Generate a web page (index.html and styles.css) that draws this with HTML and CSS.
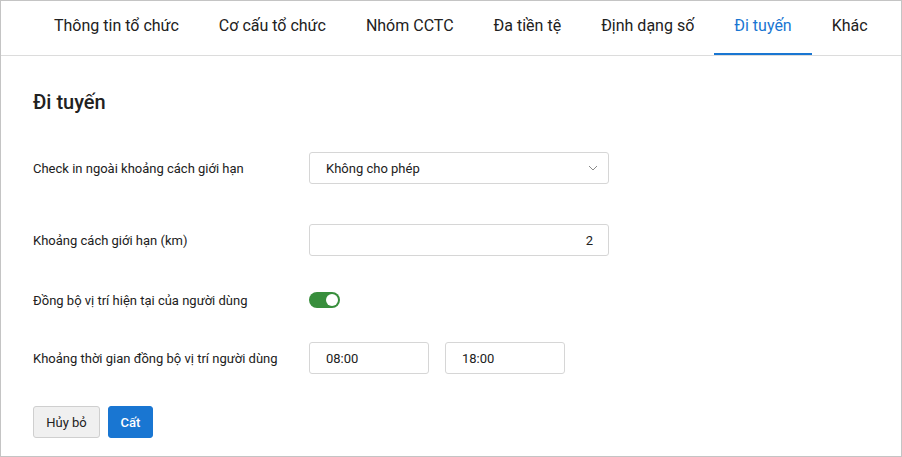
FILE: index.html
```html
<!DOCTYPE html>
<html>
<head>
    <meta charset="utf-8">
    <title>Đi tuyến</title>
    <link rel="stylesheet" href="styles.css">
</head>
<body>
    <div class="page">
        <div class="tabs">
            <div class="tab">Thông tin tổ chức</div>
            <div class="tab">Cơ cấu tổ chức</div>
            <div class="tab">Nhóm CCTC</div>
            <div class="tab">Đa tiền tệ</div>
            <div class="tab">Định dạng số</div>
            <div class="tab active">Đi tuyến</div>
            <div class="tab">Khác</div>
        </div>

        <div class="content">
            <h1>Đi tuyến</h1>

            <div class="row row-select">
                <label>Check in ngoài khoảng cách giới hạn</label>
                <div class="select">
                    <span>Không cho phép</span>
                    <svg width="10" height="6" viewBox="0 0 10 6"><path d="M1 1 L5 5 L9 1" fill="none" stroke="#8a8a8a" stroke-width="1"/></svg>
                </div>
            </div>

            <div class="row row-distance">
                <label>Khoảng cách giới hạn (km)</label>
                <div class="input number">2</div>
            </div>

            <div class="row row-toggle">
                <label>Đồng bộ vị trí hiện tại của người dùng</label>
                <div class="toggle"><div class="knob"></div></div>
            </div>

            <div class="row row-time">
                <label>Khoảng thời gian đồng bộ vị trí người dùng</label>
                <div class="time-group">
                    <div class="input time">08:00</div>
                    <div class="input time">18:00</div>
                </div>
            </div>

            <div class="actions">
                <button class="btn btn-cancel">Hủy bỏ</button>
                <button class="btn btn-save">Cất</button>
            </div>
        </div>
    </div>
</body>
</html>
```

FILE: styles.css
```css
html, body {
    margin: 0;
    padding: 0;
}

body {
    font-family: Roboto, "Noto Sans", Arial, sans-serif;
    color: #212121;
    background-color: #fff;
}

.page {
    width: 902px;
    height: 457px;
    box-sizing: border-box;
    border: 1px solid #c4c4c4;
}

.tabs {
    display: flex;
    height: 54px;
    padding-left: 33px;
    border-bottom: 1px solid #dcdcdc;
}

.tab {
    padding: 0 20px;
    height: 52px;
    line-height: 50px;
    font-size: 16px;
    color: #212121;
    border-bottom: 2px solid transparent;
}

.tab.active {
    color: #1976d2;
    border-bottom-color: #1976d2;
}

.content {
    padding: 0 32px;
}

h1 {
    margin: 33px 0 0 0;
    height: 26px;
    font-size: 20px;
    font-weight: 500;
    line-height: 26px;
}

.row {
    display: flex;
    align-items: center;
}

.row label {
    width: 276px;
    font-size: 13px;
    color: #212121;
}

.row-select {
    margin-top: 37px;
}

.row-distance {
    margin-top: 40px;
}

.row-toggle {
    margin-top: 36px;
    height: 16px;
}

.row-time {
    margin-top: 34px;
}

.select,
.input {
    box-sizing: border-box;
    height: 32px;
    border: 1px solid #d6d6d6;
    border-radius: 3px;
    font-size: 13px;
    display: flex;
    align-items: center;
}

.select {
    width: 300px;
    padding: 0 10px 0 16px;
    justify-content: space-between;
}

.number {
    width: 300px;
    padding: 0 15px;
    justify-content: flex-end;
}

.toggle {
    width: 31px;
    height: 16px;
    border-radius: 8px;
    background-color: #388e3c;
    position: relative;
}

.knob {
    position: absolute;
    top: 2px;
    right: 2px;
    width: 12px;
    height: 12px;
    border-radius: 50%;
    background-color: #fff;
}

.time-group {
    display: flex;
    gap: 16px;
}

.time {
    width: 120px;
    padding: 0 16px;
}

.actions {
    display: flex;
    gap: 8px;
    margin-top: 32px;
}

.btn {
    height: 32px;
    border-radius: 3px;
    font-family: Roboto, Arial, sans-serif;
    font-size: 13px;
    cursor: pointer;
}

.btn-cancel {
    width: 67px;
    background-color: #f0f0f0;
    border: 1px solid #cfcfcf;
    color: #212121;
}

.btn-save {
    width: 45px;
    background-color: #1976d2;
    border: 1px solid #1976d2;
    color: #fff;
    font-weight: 500;
}
```
